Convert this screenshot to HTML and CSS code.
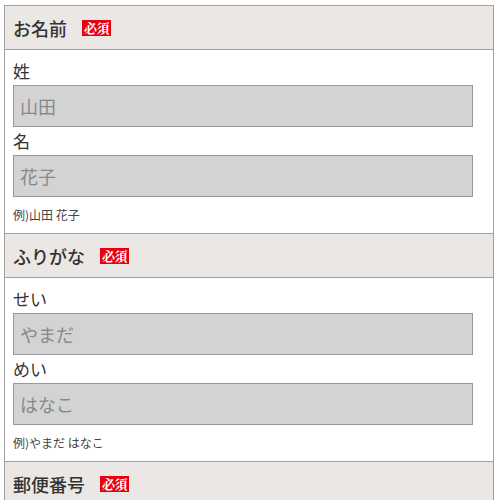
FILE: index.html
```html
<!DOCTYPE html>
<html lang="ja">
<head>
<meta charset="utf-8">
<link rel="stylesheet" href="styles.css">
</head>
<body>
<div class="form">
  <section class="sec">
    <h2 class="head">お名前<span class="req">必須</span></h2>
    <div class="body">
      <label class="lbl">姓</label>
      <input class="inp" type="text" placeholder="山田">
      <label class="lbl">名</label>
      <input class="inp" type="text" placeholder="花子">
      <p class="hint">例)山田 花子</p>
    </div>
  </section>
  <section class="sec">
    <h2 class="head">ふりがな<span class="req">必須</span></h2>
    <div class="body">
      <label class="lbl">せい</label>
      <input class="inp" type="text" placeholder="やまだ">
      <label class="lbl">めい</label>
      <input class="inp" type="text" placeholder="はなこ">
      <p class="hint">例)やまだ はなこ</p>
    </div>
  </section>
  <section class="sec">
    <h2 class="head">郵便番号<span class="req">必須</span></h2>
  </section>
</div>
</body>
</html>
```
FILE: styles.css
```css
html, body {
  margin: 0;
  padding: 0;
  background: #fff;
}
body {
  font-family: "Noto Sans CJK JP", "Noto Sans", sans-serif;
  color: #333;
}
.form {
  margin: 5px 0 0 4px;
  width: 490px;
  box-sizing: border-box;
  border-left: 1px solid #a0a0a0;
  border-right: 1px solid #a0a0a0;
}
.sec {
  border-top: 1px solid #a0a0a0;
}
.head {
  margin: 0;
  box-sizing: border-box;
  display: flex;
  align-items: center;
  padding-left: 8px;
  background: #ebe7e4;
  border-bottom: 1px solid #a0a0a0;
  height: 44px;
  font-size: 18px;
  font-weight: 500;
  color: #333;
  line-height: 1;
}
.req {
  margin-left: 15px;
  background: #e60012;
  color: #fff;
  font-family: "Noto Serif CJK JP", "Liberation Serif", "Noto Sans CJK JP", serif;
  font-weight: bold;
  font-size: 13px;
  line-height: 16px;
  padding: 0 2px;
  letter-spacing: -0.5px;
}
.body {
  display: flex;
  flex-direction: column;
  align-items: flex-start;
  padding: 7px 20px 0 8px;
}
.lbl {
  display: block;
  height: 28px;
  line-height: 28px;
  font-size: 17px;
  color: #333;
}
.inp {
  display: block;
  box-sizing: border-box;
  width: 460px;
  height: 42px;
  margin: 0;
  border: 1px solid #999;
  background: #d3d3d3;
  padding: 0 6px;
  font-family: inherit;
  font-size: 18px;
  color: #333;
  outline: none;
}
.inp::placeholder {
  color: #888;
}
.hint {
  margin: 0;
  height: 36px;
  line-height: 36px;
  font-size: 12px;
  color: #444;
}
```
